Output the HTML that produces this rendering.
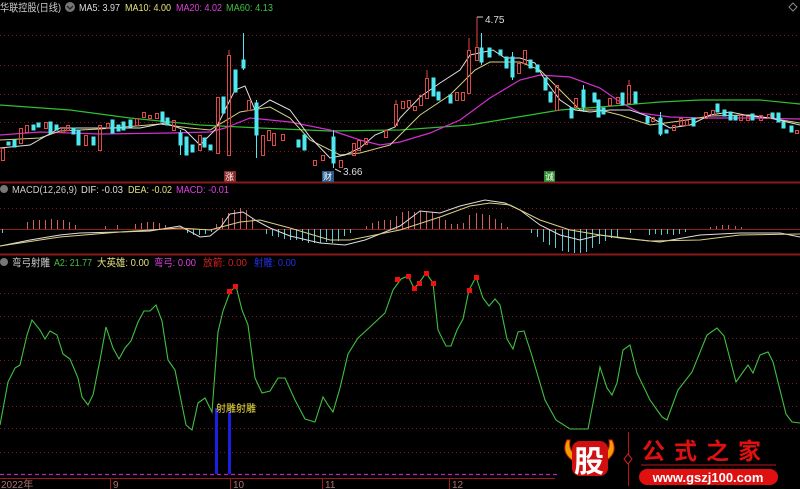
<!DOCTYPE html>
<html><head><meta charset="utf-8"><style>
html,body{margin:0;padding:0;background:#000;width:800px;height:489px;overflow:hidden}
svg{display:block}
text{font-family:"Liberation Sans","Noto Sans CJK SC",sans-serif}
</style></head><body>
<svg width="800" height="489" viewBox="0 0 800 489" xmlns="http://www.w3.org/2000/svg">
<rect width="800" height="489" fill="#000"/>
<g stroke="#7a1a1a" stroke-width="1" stroke-dasharray="1,3">
<line x1="0" y1="35.5" x2="800" y2="35.5"/><line x1="0" y1="65.5" x2="800" y2="65.5"/><line x1="0" y1="94.5" x2="800" y2="94.5"/><line x1="0" y1="122.5" x2="800" y2="122.5"/><line x1="0" y1="151.5" x2="800" y2="151.5"/>
<line x1="0" y1="208.5" x2="800" y2="208.5"/>
<line x1="0" y1="293.5" x2="800" y2="293.5"/><line x1="0" y1="316.5" x2="800" y2="316.5"/><line x1="0" y1="338.5" x2="800" y2="338.5"/><line x1="0" y1="360.5" x2="800" y2="360.5"/><line x1="0" y1="383.5" x2="800" y2="383.5"/><line x1="0" y1="406.5" x2="800" y2="406.5"/><line x1="0" y1="428.5" x2="800" y2="428.5"/><line x1="0" y1="452.5" x2="800" y2="452.5"/>
</g>
<line x1="0" y1="229.5" x2="800" y2="229.5" stroke="#8a2020" stroke-width="1"/>
<line x1="0" y1="182.5" x2="800" y2="182.5" stroke="#8a1a1a" stroke-width="2"/>
<line x1="0" y1="254.5" x2="800" y2="254.5" stroke="#8a1a1a" stroke-width="2"/>

<!-- title -->
<text x="0" y="11" font-size="10.5" fill="#ccc" textLength="61" lengthAdjust="spacingAndGlyphs">华联控股(日线)</text>
<circle cx="70" cy="7" r="5" fill="#777"/><path d="M67 6 L70 9 L73 6" stroke="#222" fill="none" stroke-width="1.3"/>
<text x="79" y="11" font-size="10.5" fill="#ddd" textLength="41" lengthAdjust="spacingAndGlyphs">MA5: 3.97</text>
<text x="125" y="11" font-size="10.5" fill="#e4e080" textLength="46" lengthAdjust="spacingAndGlyphs">MA10: 4.00</text>
<text x="176" y="11" font-size="10.5" fill="#e040e0" textLength="46" lengthAdjust="spacingAndGlyphs">MA20: 4.02</text>
<text x="226" y="11" font-size="10.5" fill="#40c040" textLength="47" lengthAdjust="spacingAndGlyphs">MA60: 4.13</text>
<path d="M793 3 L797 7 L793 11 L789 7 Z" stroke="#888" fill="none"/>

<polyline fill="none" stroke="#30c030" stroke-width="1.2" points="0,105 70,110 130,118 200,125 260,128 330,131 400,130 470,125 530,115 560,110 600,107 660,102 700,100 760,100 800,104"/>
<polyline fill="none" stroke="#d030d0" stroke-width="1.2" points="0,135 40,132 100,134 170,133 210,132 225,128 250,118 290,122 330,130 360,140 380,145 400,142 430,133 460,120 490,98 520,80 540,75 570,77 600,88 620,102 640,113 670,117 700,118 750,118 800,119"/>
<polyline fill="none" stroke="#d8d080" stroke-width="1" points="0,140 40,138 60,131 100,129 160,124 190,128 210,130 240,112 270,107 290,118 310,140 340,155 360,153 390,145 400,135 420,115 450,95 475,70 490,62 520,62 540,70 560,90 580,110 600,110 620,115 650,125 680,121 710,116 750,115 800,123"/>
<polyline fill="none" stroke="#e0e0e0" stroke-width="1" points="0,148 30,145 60,128 90,128 140,128 165,123 185,130 200,145 215,130 235,90 245,86 255,110 270,100 290,110 310,137 330,158 345,155 360,148 375,135 395,127 400,118 420,97 440,83 460,70 470,55 493,50 505,58 520,58 535,63 545,80 560,100 575,110 590,112 610,110 630,110 650,117 670,128 690,125 710,115 730,112 750,116 770,118 800,125"/>

<g fill="#50e8f0" stroke="#50e8f0" stroke-width="1">
<rect x="7" y="142" width="3" height="3"/><rect x="13" y="140" width="3" height="7"/><rect x="32" y="125" width="3" height="5"/><rect x="37" y="123" width="3" height="4"/><rect x="49" y="122" width="3" height="11"/><rect x="55" y="125" width="3" height="5"/><rect x="72" y="128" width="3" height="6"/><rect x="77" y="130" width="3" height="15"/><rect x="92" y="137" width="3" height="8"/><rect x="111" y="120" width="3" height="13"/><rect x="117" y="125" width="3" height="6"/><rect x="122" y="122" width="3" height="8"/><rect x="129" y="120" width="3" height="7"/><rect x="161" y="112" width="3" height="10"/><rect x="166" y="118" width="3" height="7"/><rect x="179" y="133" width="3" height="12"/><rect x="185" y="137" width="3" height="18"/><rect x="191" y="145" width="3" height="7"/><rect x="203" y="138" width="3" height="9"/><rect x="209" y="145" width="3" height="5"/>
<rect x="222" y="97" width="3" height="16"/><rect x="234" y="70" width="3" height="22"/><rect x="242" y="60" width="3" height="8"/><rect x="255" y="103" width="3" height="32"/><rect x="297" y="140" width="3" height="7"/><rect x="303" y="135" width="3" height="15"/><rect x="332" y="137" width="3" height="26"/>
<rect x="432" y="78" width="3" height="18"/><rect x="437" y="92" width="3" height="8"/><rect x="449" y="95" width="3" height="8"/><rect x="480" y="48" width="3" height="14"/><rect x="488" y="48" width="3" height="9"/><rect x="499" y="50" width="3" height="5"/><rect x="505" y="57" width="3" height="11"/><rect x="511" y="57" width="3" height="20"/><rect x="529" y="60" width="3" height="8"/><rect x="536" y="65" width="3" height="7"/><rect x="544" y="78" width="3" height="12"/><rect x="549" y="92" width="3" height="10"/><rect x="570" y="108" width="3" height="10"/><rect x="582" y="90" width="3" height="17"/><rect x="593" y="93" width="3" height="9"/><rect x="597" y="100" width="3" height="17"/><rect x="602" y="108" width="3" height="6"/><rect x="621" y="93" width="3" height="12"/><rect x="634" y="92" width="3" height="11"/><rect x="646" y="117" width="3" height="6"/><rect x="659" y="118" width="3" height="16"/><rect x="665" y="130" width="3" height="3"/><rect x="692" y="118" width="3" height="8"/><rect x="716" y="104" width="3" height="8"/><rect x="723" y="110" width="3" height="6"/><rect x="729" y="112" width="3" height="8"/><rect x="734" y="116" width="3" height="4"/><rect x="751" y="114" width="3" height="6"/><rect x="771" y="113" width="3" height="5"/><rect x="777" y="113" width="3" height="9"/><rect x="782" y="122" width="3" height="6"/><rect x="790" y="126" width="3" height="6"/>
</g>
<g stroke="#50e8f0" stroke-width="1">
<line x1="243.5" y1="33" x2="243.5" y2="70"/><line x1="256.5" y1="100" x2="256.5" y2="158"/><line x1="180.5" y1="130" x2="180.5" y2="155"/><line x1="333.5" y1="130" x2="333.5" y2="168"/><line x1="481.5" y1="33" x2="481.5" y2="65"/><line x1="512.5" y1="52" x2="512.5" y2="80"/><line x1="583.5" y1="85" x2="583.5" y2="112"/><line x1="660.5" y1="112" x2="660.5" y2="136"/>
</g>
<g fill="none" stroke="#e04848" stroke-width="1">
<rect x="1.5" y="148.5" width="3" height="12"/><rect x="19.5" y="128.5" width="3" height="15"/><rect x="25.5" y="125.5" width="3" height="7"/><rect x="44.5" y="122.5" width="3" height="6"/><rect x="61.5" y="127.5" width="3" height="5"/><rect x="66.5" y="125.5" width="3" height="5"/><rect x="84.5" y="135.5" width="3" height="10"/><rect x="98.5" y="125.5" width="3" height="25"/><rect x="106.5" y="123.5" width="3" height="5"/><rect x="135.5" y="118.5" width="3" height="7"/><rect x="142.5" y="112.5" width="3" height="5"/><rect x="148.5" y="115.5" width="3" height="3"/><rect x="155.5" y="113.5" width="3" height="5"/><rect x="172.5" y="120.5" width="3" height="10"/><rect x="198.5" y="135.5" width="3" height="15"/>
<rect x="216.5" y="97.5" width="3" height="56"/><rect x="227.5" y="55.5" width="3" height="100"/><rect x="247.5" y="100.5" width="3" height="10"/><rect x="261.5" y="135.5" width="3" height="20"/><rect x="267.5" y="130.5" width="3" height="10"/><rect x="272.5" y="133.5" width="3" height="12"/><rect x="281.5" y="134.5" width="3" height="6"/><rect x="313.5" y="160.5" width="3" height="5"/><rect x="321.5" y="155.5" width="3" height="5"/><rect x="339.5" y="160.5" width="3" height="7"/><rect x="352.5" y="143.5" width="3" height="12"/><rect x="357.5" y="140.5" width="3" height="10"/><rect x="364.5" y="138.5" width="3" height="6"/><rect x="384.5" y="130.5" width="3" height="7"/><rect x="394.5" y="104.5" width="3" height="21"/>
<rect x="401.5" y="101.5" width="3" height="7"/><rect x="407.5" y="100.5" width="3" height="7"/><rect x="413.5" y="106.5" width="3" height="4"/><rect x="419.5" y="95.5" width="3" height="10"/><rect x="425.5" y="78.5" width="3" height="20"/><rect x="455.5" y="92.5" width="3" height="8"/><rect x="461.5" y="92.5" width="3" height="8"/><rect x="467.5" y="50.5" width="3" height="43"/><rect x="475.5" y="47.5" width="3" height="13"/><rect x="517.5" y="63.5" width="3" height="10"/><rect x="523.5" y="50.5" width="3" height="13"/><rect x="555.5" y="85.5" width="3" height="25"/><rect x="574.5" y="98.5" width="3" height="9"/><rect x="608.5" y="98.5" width="3" height="7"/><rect x="616.5" y="97.5" width="3" height="6"/><rect x="627.5" y="85.5" width="3" height="18"/><rect x="651.5" y="117.5" width="3" height="4"/><rect x="672.5" y="125.5" width="3" height="5"/><rect x="679.5" y="118.5" width="3" height="7"/><rect x="685.5" y="120.5" width="3" height="5"/><rect x="704.5" y="112.5" width="3" height="6"/><rect x="711.5" y="110.5" width="3" height="5"/><rect x="739.5" y="115.5" width="3" height="5"/><rect x="746.5" y="116.5" width="3" height="4"/><rect x="759.5" y="115.5" width="3" height="5"/><rect x="767.5" y="114.5" width="3" height="4"/><rect x="795.5" y="130.5" width="3" height="3"/>
<line x1="229" y1="50" x2="229" y2="55"/><line x1="469" y1="38" x2="469" y2="50"/><line x1="477" y1="17" x2="477" y2="47"/><line x1="396" y1="100" x2="396" y2="104"/><line x1="427" y1="70" x2="427" y2="78"/><line x1="629" y1="80" x2="629" y2="85"/>
</g>
<path d="M477 17 L483 17" stroke="#ccc"/>
<text x="485" y="23" font-size="10" fill="#ddd">4.75</text>
<path d="M335 169 L341 172" stroke="#ccc"/>
<text x="343" y="175" font-size="10" fill="#ddd">3.66</text>
<rect x="224" y="171" width="12" height="11" fill="#8a2828"/><text x="225" y="180" font-size="9" fill="#fff">涨</text>
<rect x="322" y="171" width="12" height="11" fill="#285a8a"/><text x="323" y="180" font-size="9" fill="#fff">财</text>
<rect x="544" y="171" width="11" height="11" fill="#2a8a2a"/><text x="545" y="180" font-size="9" fill="#fff">诚</text>

<circle cx="4" cy="189" r="4" fill="#777"/>
<text x="12" y="193" font-size="10.5" fill="#ccc" textLength="65" lengthAdjust="spacingAndGlyphs">MACD(12,26,9)</text>
<text x="81" y="193" font-size="10.5" fill="#ddd" textLength="42" lengthAdjust="spacingAndGlyphs">DIF: -0.03</text>
<text x="128" y="193" font-size="10.5" fill="#e4e080" textLength="44" lengthAdjust="spacingAndGlyphs">DEA: -0.02</text>
<text x="176" y="193" font-size="10.5" fill="#e040e0" textLength="53" lengthAdjust="spacingAndGlyphs">MACD: -0.01</text>

<g stroke="#d06060" stroke-width="1">
<line x1="27.5" y1="229" x2="27.5" y2="222"/><line x1="33.5" y1="229" x2="33.5" y2="220"/><line x1="39.5" y1="229" x2="39.5" y2="220"/><line x1="45.5" y1="229" x2="45.5" y2="220"/><line x1="51.5" y1="229" x2="51.5" y2="219"/><line x1="57.5" y1="229" x2="57.5" y2="220"/><line x1="63.5" y1="229" x2="63.5" y2="220"/><line x1="69.5" y1="229" x2="69.5" y2="222"/><line x1="75.5" y1="229" x2="75.5" y2="225"/><line x1="105.5" y1="229" x2="105.5" y2="226"/><line x1="117.5" y1="229" x2="117.5" y2="225"/><line x1="135.5" y1="229" x2="135.5" y2="224"/><line x1="141.5" y1="229" x2="141.5" y2="223"/><line x1="147.5" y1="229" x2="147.5" y2="222"/><line x1="153.5" y1="229" x2="153.5" y2="222"/><line x1="159.5" y1="229" x2="159.5" y2="223"/><line x1="165.5" y1="229" x2="165.5" y2="225"/>
<line x1="216.5" y1="229" x2="216.5" y2="224"/><line x1="222.5" y1="229" x2="222.5" y2="218"/><line x1="228.5" y1="229" x2="228.5" y2="213"/><line x1="234.5" y1="229" x2="234.5" y2="210"/><line x1="240.5" y1="229" x2="240.5" y2="208"/><line x1="246.5" y1="229" x2="246.5" y2="210"/><line x1="252.5" y1="229" x2="252.5" y2="218"/>
<line x1="366.5" y1="229" x2="366.5" y2="226"/><line x1="372.5" y1="229" x2="372.5" y2="223"/><line x1="378.5" y1="229" x2="378.5" y2="221"/><line x1="384.5" y1="229" x2="384.5" y2="220"/><line x1="390.5" y1="229" x2="390.5" y2="220"/><line x1="396.5" y1="229" x2="396.5" y2="216"/>
<line x1="402.5" y1="229" x2="402.5" y2="212"/><line x1="408.5" y1="229" x2="408.5" y2="211"/><line x1="414.5" y1="229" x2="414.5" y2="212"/><line x1="420.5" y1="229" x2="420.5" y2="211"/><line x1="426.5" y1="229" x2="426.5" y2="212"/><line x1="432.5" y1="229" x2="432.5" y2="212"/><line x1="439.5" y1="229" x2="439.5" y2="217"/><line x1="445.5" y1="229" x2="445.5" y2="220"/><line x1="451.5" y1="229" x2="451.5" y2="224"/><line x1="457.5" y1="229" x2="457.5" y2="224"/><line x1="463.5" y1="229" x2="463.5" y2="223"/><line x1="469.5" y1="229" x2="469.5" y2="215"/><line x1="476.5" y1="229" x2="476.5" y2="213"/><line x1="482.5" y1="229" x2="482.5" y2="214"/><line x1="489.5" y1="229" x2="489.5" y2="215"/><line x1="495.5" y1="229" x2="495.5" y2="219"/><line x1="501.5" y1="229" x2="501.5" y2="223"/><line x1="507.5" y1="229" x2="507.5" y2="227"/>
<line x1="710.5" y1="229" x2="710.5" y2="227"/><line x1="716.5" y1="229" x2="716.5" y2="226"/><line x1="722.5" y1="229" x2="722.5" y2="225"/><line x1="728.5" y1="229" x2="728.5" y2="225"/><line x1="735.5" y1="229" x2="735.5" y2="226"/><line x1="741.5" y1="229" x2="741.5" y2="227"/>
</g>
<g stroke="#60c8d0" stroke-width="1">
<line x1="2.5" y1="229" x2="2.5" y2="233"/><line x1="187.5" y1="229" x2="187.5" y2="233"/><line x1="193.5" y1="229" x2="193.5" y2="235"/><line x1="199.5" y1="229" x2="199.5" y2="235"/><line x1="205.5" y1="229" x2="205.5" y2="234"/><line x1="211.5" y1="229" x2="211.5" y2="232"/>
<line x1="266.5" y1="229" x2="266.5" y2="234"/><line x1="272.5" y1="229" x2="272.5" y2="236"/><line x1="278.5" y1="229" x2="278.5" y2="237"/><line x1="284.5" y1="229" x2="284.5" y2="239"/><line x1="290.5" y1="229" x2="290.5" y2="240"/><line x1="296.5" y1="229" x2="296.5" y2="240"/><line x1="302.5" y1="229" x2="302.5" y2="241"/><line x1="308.5" y1="229" x2="308.5" y2="243"/><line x1="314.5" y1="229" x2="314.5" y2="243"/><line x1="320.5" y1="229" x2="320.5" y2="243"/><line x1="326.5" y1="229" x2="326.5" y2="242"/><line x1="332.5" y1="229" x2="332.5" y2="243"/><line x1="338.5" y1="229" x2="338.5" y2="241"/><line x1="344.5" y1="229" x2="344.5" y2="236"/><line x1="350.5" y1="229" x2="350.5" y2="233"/>
<line x1="531.5" y1="229" x2="531.5" y2="233"/><line x1="537.5" y1="229" x2="537.5" y2="237"/><line x1="543.5" y1="229" x2="543.5" y2="242"/><line x1="549.5" y1="229" x2="549.5" y2="245"/><line x1="555.5" y1="229" x2="555.5" y2="248"/><line x1="562.5" y1="229" x2="562.5" y2="251"/><line x1="568.5" y1="229" x2="568.5" y2="252"/><line x1="574.5" y1="229" x2="574.5" y2="253"/><line x1="580.5" y1="229" x2="580.5" y2="253"/><line x1="586.5" y1="229" x2="586.5" y2="252"/><line x1="592.5" y1="229" x2="592.5" y2="248"/><line x1="599.5" y1="229" x2="599.5" y2="244"/><line x1="605.5" y1="229" x2="605.5" y2="241"/><line x1="611.5" y1="229" x2="611.5" y2="238"/><line x1="617.5" y1="229" x2="617.5" y2="237"/><line x1="630.5" y1="229" x2="630.5" y2="233"/><line x1="649.5" y1="229" x2="649.5" y2="235"/><line x1="655.5" y1="229" x2="655.5" y2="234"/><line x1="661.5" y1="229" x2="661.5" y2="235"/><line x1="667.5" y1="229" x2="667.5" y2="234"/><line x1="673.5" y1="229" x2="673.5" y2="235"/><line x1="679.5" y1="229" x2="679.5" y2="234"/><line x1="685.5" y1="229" x2="685.5" y2="232"/>
</g>
<polyline fill="none" stroke="#ddd" stroke-width="1" points="0,246 30,240 60,235 80,233 120,232 150,231 180,226 200,237 210,236 220,228 230,214 243,212 255,220 270,228 290,236 320,243 345,245 365,240 385,232 400,226 420,211 440,213 460,206 485,200 505,203 520,210 540,225 560,235 580,240 600,235 620,238 660,242 700,235 740,233 780,233 800,237"/>
<polyline fill="none" stroke="#d8d080" stroke-width="1" points="0,246 60,237 120,232 180,228 210,230 240,222 260,220 290,228 330,240 350,240 380,234 400,230 440,217 470,206 490,203 510,205 540,220 570,230 600,235 650,241 700,240 740,235 800,234"/>

<circle cx="4" cy="262" r="4" fill="#777"/>
<text x="12" y="266" font-size="10.5" fill="#ccc" textLength="38" lengthAdjust="spacingAndGlyphs">弯弓射雕</text>
<text x="54" y="266" font-size="10.5" fill="#40c040" textLength="38" lengthAdjust="spacingAndGlyphs">A2: 21.77</text>
<text x="97" y="266" font-size="10.5" fill="#e4e080" textLength="52" lengthAdjust="spacingAndGlyphs">大英雄: 0.00</text>
<text x="154" y="266" font-size="10.5" fill="#e040e0" textLength="42" lengthAdjust="spacingAndGlyphs">弯弓: 0.00</text>
<text x="203" y="266" font-size="10.5" fill="#d02020" textLength="44" lengthAdjust="spacingAndGlyphs">放箭: 0.00</text>
<text x="254" y="266" font-size="10.5" fill="#2030e0" textLength="42" lengthAdjust="spacingAndGlyphs">射雕: 0.00</text>

<polyline fill="none" stroke="#40c040" stroke-width="1.1" points="0,425 8,382 15,368 20,365 27,335 32,320 40,330 45,339 50,331 57,335 63,354 70,359 78,378 82,397 88,405 93,395 100,360 106,327 113,348 119,359 125,348 131,341 138,322 144,311 150,311 156,305 162,321 168,360 175,370 180,395 186,425 192,430 198,403 205,398 212,412 218,332 223,311 230,292 236,286 242,310 248,325 255,378 262,393 270,391 278,378 285,378 295,400 305,419 315,422 323,397 328,405 333,412 340,388 348,354 358,338 370,327 385,313 393,290 401,279 408,276 414,288 419,283 426,273 433,283 438,330 446,346 451,346 457,330 463,319 469,290 476,277 483,298 489,306 495,299 500,305 507,339 513,349 518,332 524,331 532,356 545,400 556,420 570,429 588,429 600,367 607,388 612,395 617,383 623,350 630,345 637,373 650,400 662,417 667,420 678,390 692,372 707,335 717,328 724,336 736,382 748,365 753,373 760,355 768,352 773,362 786,414 792,422 800,423"/>
<g fill="#f01010">
<rect x="227" y="289" width="5" height="5"/><rect x="233" y="284" width="5" height="5"/><rect x="395" y="277" width="5" height="5"/><rect x="406" y="274" width="5" height="5"/><rect x="412" y="286" width="5" height="5"/><rect x="417" y="281" width="5" height="5"/><rect x="424" y="271" width="5" height="5"/><rect x="431" y="281" width="5" height="5"/><rect x="467" y="288" width="5" height="5"/><rect x="474" y="275" width="5" height="5"/>
</g>
<rect x="215" y="408" width="3" height="66" fill="#1a20e0"/>
<rect x="228" y="412" width="3" height="62" fill="#1a20e0"/>
<text x="216" y="412" font-size="10" fill="#f0e040">射雕射雕</text>

<line x1="0" y1="474.5" x2="800" y2="474.5" stroke="#c020c0" stroke-width="1.2" stroke-dasharray="4,3"/>
<line x1="0" y1="478.5" x2="555" y2="478.5" stroke="#9a1a1a" stroke-width="1"/>
<g stroke="#9a1a1a"><line x1="110.5" y1="478" x2="110.5" y2="489"/><line x1="230.5" y1="478" x2="230.5" y2="489"/><line x1="322.5" y1="478" x2="322.5" y2="489"/><line x1="449.5" y1="478" x2="449.5" y2="489"/></g>
<g font-size="10" fill="#b07070">
<text x="1" y="488">2022年</text><text x="113" y="488">9</text><text x="233" y="488">10</text><text x="325" y="488">11</text><text x="452" y="488">12</text>
</g>

<rect x="558" y="432" width="242" height="57" fill="#000"/>
<path d="M567 440 Q561 452 572 460 L576 455 Q568 450 570 440 Z" fill="#f0a000" stroke="#e02000" stroke-width="1"/>
<path d="M612 440 Q618 452 607 460 L603 455 Q611 450 609 440 Z" fill="#f0a000" stroke="#e02000" stroke-width="1"/>
<rect x="572" y="441" width="36" height="35" rx="8" fill="#d01010"/>
<text x="574" y="472" font-size="30" font-weight="bold" fill="#fff" font-family="'Noto Sans CJK SC',sans-serif">股</text>
<line x1="628.5" y1="432" x2="628.5" y2="486" stroke="#c01010" stroke-width="1"/>
<path d="M628 454 L632 459 L628 464 L624 459 Z" fill="#000" stroke="#e02020"/>
<text x="642" y="459" font-size="23" font-weight="bold" fill="#e01010" letter-spacing="9" font-family="'Noto Serif CJK SC','Noto Sans CJK SC',serif">公式之家</text>
<line x1="641" y1="465" x2="776" y2="465" stroke="#801010" stroke-width="1.5"/>
<rect x="639" y="469" width="139" height="16" rx="8" fill="#e01010"/>
<text x="708" y="482" font-size="13" font-weight="bold" fill="#fff" text-anchor="middle">www.gszj100.com</text>
</svg>
</body></html>
